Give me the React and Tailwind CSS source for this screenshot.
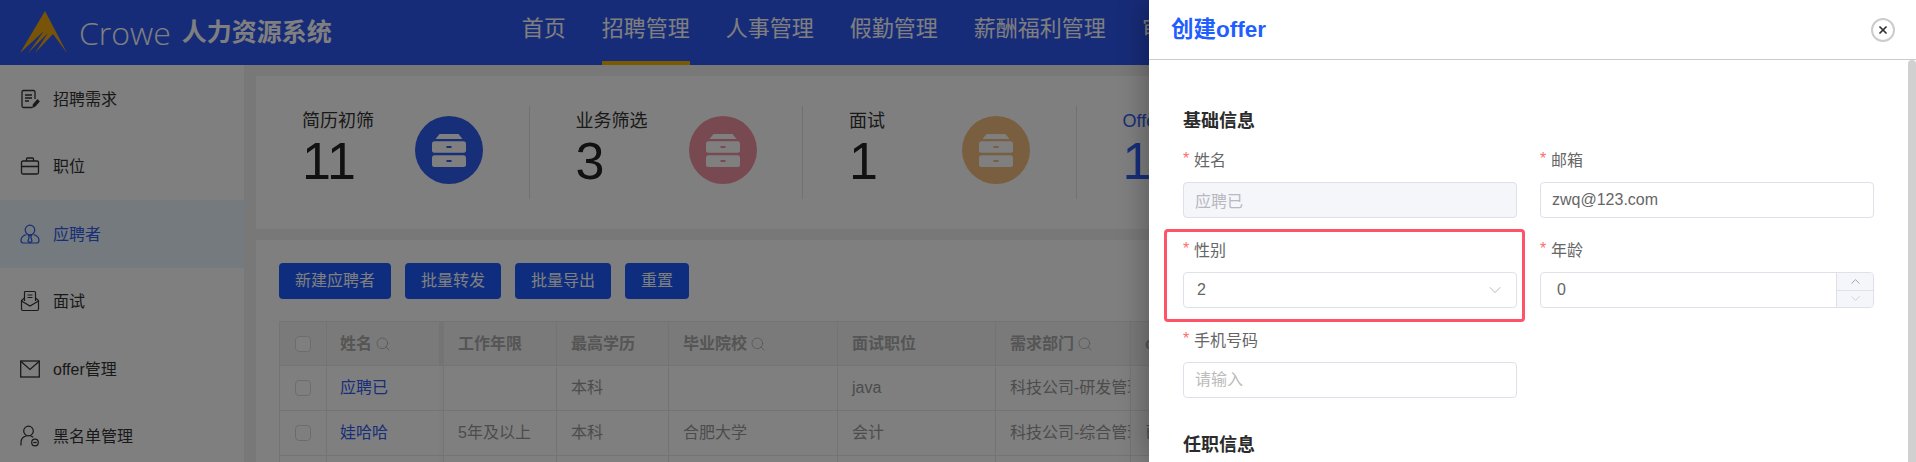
import React from 'react'
import { ChevronDown, ChevronUp, Search, X } from 'lucide-react'

const navItems = ['首页', '招聘管理', '人事管理', '假勤管理', '薪酬福利管理', '审批管理']

const stats = [
  { label: '简历初筛', value: 11, color: 'bg-[#2f5cf0]', icon: '#2f5cf0' },
  { label: '业务筛选', value: 3, color: 'bg-[#f293a2]', icon: '#f293a2' },
  { label: '面试', value: 1, color: 'bg-[#f5bd80]', icon: '#f5bd80' },
  { label: 'Offer', value: 1, color: 'bg-[#2f5cf0]', icon: '#2f5cf0', active: true },
]

function LogoMark() {
  return (
    <svg width="48" height="43" viewBox="0 0 48 43" className="shrink-0">
      <path d="M25 0 L47 42 L33 23 L15 42 L28 22 L8 42 L24 20 L0 42 Z" fill="#f0a810" />
    </svg>
  )
}

function NoteIcon() {
  return (
    <svg width="20" height="20" viewBox="0 0 20 20" fill="none" stroke="currentColor" strokeWidth="1.3">
      <path d="M15 10V3a1.5 1.5 0 0 0-1.5-1.5h-10A1.5 1.5 0 0 0 2 3v14a1.5 1.5 0 0 0 1.5 1.5H12" />
      <path d="M5 6h7M5 9h7M5 12h4" />
      <path d="M13 18l.5-2.5 4-4.5 1.5 1.5-4 4.5z" fill="currentColor" />
    </svg>
  )
}

function BriefcaseIcon() {
  return (
    <svg width="20" height="20" viewBox="0 0 20 20" fill="none" stroke="currentColor" strokeWidth="1.3">
      <rect x="1.5" y="5" width="17" height="13" rx="1.5" />
      <path d="M6.5 5V3a1 1 0 0 1 1-1h5a1 1 0 0 1 1 1v2M1.5 10.5h17" />
    </svg>
  )
}

function ApplicantIcon() {
  return (
    <svg width="20" height="20" viewBox="0 0 20 20" fill="none" stroke="currentColor" strokeWidth="1.2">
      <circle cx="10" cy="6" r="4.8" />
      <path d="M6.5 10.5C3 11.5 1 14 1 16.5 1 18 2 19 3.5 19h13c1.500 0 2.500-1 2.500-2.500 0-2.500-2-5-5.500-6" />
      <path d="M8.500 11.500h3l-.7 1.500 1.200 4-2 2-2-2 1.200-4z" />
    </svg>
  )
}

function InterviewIcon() {
  return (
    <svg width="20" height="22" viewBox="0 0 20 22" fill="none" stroke="currentColor" strokeWidth="1.2">
      <path d="M4.500 11V2.500a1 1 0 0 1 1-1h9a1 1 0 0 1 1 1V11" />
      <path d="M7.500 5h5M7.500 7.500h5" />
      <path d="M4.500 8 1.500 10.500V19a1.500 1.500 0 0 0 1.500 1.500h14a1.500 1.500 0 0 0 1.500-1.500v-8.500L15.500 8" />
      <path d="M1.500 11 10 16l8.500-5" />
    </svg>
  )
}

function MailIcon() {
  return (
    <svg width="20" height="18" viewBox="0 0 20 18" fill="none" stroke="currentColor" strokeWidth="1.3">
      <rect x="0.700" y="1" width="18.600" height="16" />
      <path d="M1 1.500 10 9.500l9-8" />
    </svg>
  )
}

function BlacklistIcon() {
  return (
    <svg width="20" height="22" viewBox="0 0 20 22" fill="none" stroke="currentColor" strokeWidth="1.2">
      <circle cx="8.500" cy="6" r="4.800" />
      <path d="M1 20.500v-3c0-3.500 2.500-6 5.500-6.500M10.500 11c1 .2 2 .7 2.700 1.300" />
      <circle cx="15" cy="17.500" r="3.300" />
      <path d="M13.300 17.500h3.400" />
    </svg>
  )
}

const sideItems = [
  { label: '招聘需求', Icon: NoteIcon },
  { label: '职位', Icon: BriefcaseIcon },
  { label: '应聘者', Icon: ApplicantIcon, active: true },
  { label: '面试', Icon: InterviewIcon },
  { label: 'offer管理', Icon: MailIcon },
  { label: '黑名单管理', Icon: BlacklistIcon },
]

function DrawerCabinet({ color }) {
  return (
    <svg width="34" height="33" viewBox="0 0 34 33">
      <path d="M7.500 0h19l4 5H3.500z" fill="#fff" />
      <rect x="0" y="7.300" width="34" height="11.400" rx="2.500" fill="#fff" />
      <rect x="0" y="21.300" width="34" height="11.700" rx="2.500" fill="#fff" />
      <rect x="14.500" y="12" width="5" height="2" fill={color} />
      <rect x="14.500" y="26" width="5" height="2" fill={color} />
    </svg>
  )
}

function Checkbox() {
  return <span className="block h-4 w-4 rounded-sm border border-[#d9d9d9] bg-white" />
}

const columns = [
  { title: '工作年限' },
  { title: '最高学历' },
  { title: '毕业院校', search: true },
  { title: '面试职位' },
  { title: '需求部门', search: true },
  { title: 'offer状态' },
]

const rows = [
  { name: '应聘已', cells: ['', '本科', '', 'java', '科技公司-研发管理部', ''] },
  { name: '娃哈哈', cells: ['5年及以上', '本科', '合肥大学', '会计', '科技公司-综合管理部', '已发送'] },
  { name: '', cells: ['', '', '', '', '', ''] },
]

function Table() {
  return (
    <table className="w-[1400px] table-fixed border-collapse text-[16px]">
      <colgroup>
        <col className="w-[47px]" />
        <col className="w-[117px]" />
        <col className="w-[113px]" />
        <col className="w-[112px]" />
        <col className="w-[169px]" />
        <col className="w-[158px]" />
        <col className="w-[135px]" />
        <col />
      </colgroup>
      <thead>
        <tr className="h-[44px] bg-[#f5f5f5] font-semibold text-[#aaa]">
          <th className="border border-[#e8e8e8] pl-[15px]">
            <Checkbox />
          </th>
          <th className="relative border border-[#e8e8e8] pl-[13px] text-left font-semibold">
            <span className="flex items-center gap-[3px]">
              姓名
              <Search size={16} strokeWidth={1.2} />
            </span>
            <span className="absolute inset-y-0 right-0 w-[4px] bg-black/5" />
          </th>
          {columns.map((col) => (
            <th key={col.title} className="border border-[#e8e8e8] pl-[14px] text-left font-semibold">
              <span className="flex items-center gap-[3px]">
                {col.title}
                {col.search && <Search size={16} strokeWidth={1.2} />}
              </span>
            </th>
          ))}
          <th className="border border-[#e8e8e8]" />
        </tr>
      </thead>
      <tbody>
        {rows.map((row, i) => (
          <tr key={i} className="h-[45px] bg-white text-[#999]">
            <td className="border border-[#e8e8e8] pl-[15px]">
              <Checkbox />
            </td>
            <td className="relative border border-[#e8e8e8] pl-[13px] text-[#2f5cf0]">
              {row.name}
              <span className="absolute inset-y-0 right-0 w-[4px] bg-black/[0.02]" />
            </td>
            {row.cells.map((cell, j) => (
              <td key={j} className="overflow-hidden border border-[#e8e8e8] pl-[14px] pr-[2px] whitespace-nowrap">
                {cell}
              </td>
            ))}
            <td className="border border-[#e8e8e8]" />
          </tr>
        ))}
      </tbody>
    </table>
  )
}

function Label({ children }) {
  return (
    <label className="flex h-6 items-center pt-[2px] text-[16px] leading-6 text-[#666]">
      <span className="mr-[4px] w-[7px] -translate-y-[2px] text-[16px] leading-none text-[#ff6b6b]">*</span>
      {children}
    </label>
  )
}

const inputClass =
  'mt-[10px] block h-9 w-full rounded-[4px] border border-[#dfe0ea] px-[11px] text-[16px] text-[#666] outline-none placeholder:text-[#bbb]'

export default function App() {
  return (
    <div className="relative h-[462px] w-full overflow-hidden bg-white font-['Liberation_Sans','Noto_Sans_CJK_SC',sans-serif]">
      {/* Top bar */}
      <header className="flex h-[65px] items-center bg-[#2f58f2] pl-[20px] text-white">
        <LogoMark />
        <span className="ml-[11px] font-['Open_Sans',sans-serif] text-[32px] font-light">Crowe</span>
        <span className="ml-[11px] text-[25px] font-bold">人力资源系统</span>
        <nav className="ml-[190px] flex h-full gap-9">
          {navItems.map((item) => (
            <a
              key={item}
              className={`flex items-center whitespace-nowrap border-b-4 pb-[5px] text-[22px] ${
                item === '招聘管理' ? 'border-[#f5b400]' : 'border-transparent'
              }`}
            >
              {item}
            </a>
          ))}
        </nav>
      </header>

      <div className="flex h-[397px]">
        {/* Sidebar */}
        <aside className="w-[244px] shrink-0 bg-white">
          {sideItems.map(({ label, Icon, active }) => (
            <div
              key={label}
              className={`flex h-[67.500px] items-center gap-[13px] pl-[20px] text-[16px] ${
                active ? 'bg-[#e8f4fb] text-[#2f5cf0]' : 'text-[#333]'
              }`}
            >
              <span className="flex w-5 justify-center">
                <Icon />
              </span>
              <span className="pt-[2px]">{label}</span>
            </div>
          ))}
        </aside>

        {/* Main content */}
        <main className="min-w-0 flex-1 overflow-hidden bg-[#f0f0f0] pl-3 pt-[11px]">
          <section className="flex h-[153px] w-[1700px] items-center bg-white">
            {stats.map((s) => (
              <div
                key={s.label}
                className="flex h-[93px] w-[273.500px] shrink-0 border-r border-[#e3e3e3] pl-[46px]"
              >
                <div className="w-[113px] pt-[2px]">
                  <div className={`text-[18px] leading-[26px] ${s.active ? 'text-[#2f5cf0]' : 'text-[#333]'}`}>{s.label}</div>
                  <div className={`text-[52px] leading-[54px] ${s.active ? 'text-[#2f5cf0]' : 'text-[#222]'}`}>{s.value}</div>
                </div>
                <div className={`mt-[10px] flex h-[68px] w-[68px] items-center justify-center rounded-full ${s.color}`}>
                  <DrawerCabinet color={s.icon} />
                </div>
              </div>
            ))}
          </section>

          <section className="mt-[11px] h-[300px] w-[1700px] bg-white pl-[23px] pt-[23px]">
            <div className="flex gap-[14px]">
              {['新建应聘者', '批量转发', '批量导出', '重置'].map((label) => (
                <button key={label} className="h-9 rounded-[4px] bg-[#1d5aff] px-4 text-[16px] text-white">
                  {label}
                </button>
              ))}
            </div>
            <div className="mt-[22px]">
              <Table />
            </div>
          </section>
        </main>
      </div>

      {/* Mask */}
      <div className="absolute inset-0 bg-black/50" />

      {/* Drawer */}
      <div className="absolute inset-y-0 right-0 flex w-[767px] flex-col bg-white shadow-[-6px_0_24px_rgba(0,0,0,0.25)]">
        <div className="flex h-[60px] shrink-0 items-center justify-between border-b border-[#ccc] pl-[22px] pr-[21px]">
          <h2 className="text-[22.500px] font-semibold text-[#1f5eff]">创建offer</h2>
          <button className="flex h-6 w-6 items-center justify-center rounded-full border-2 border-[#ccc] text-[#333]">
            <X size={12} strokeWidth={3.5} />
          </button>
        </div>

        <div className="flex min-h-0 flex-1">
          <div className="flex-1 overflow-hidden pl-[34px] pr-[34px] pt-[48px]">
            <h3 className="text-[18px] font-bold leading-[27px] text-[#2b2b2b]">基础信息</h3>
            <div className="mt-[13px] grid grid-cols-2 gap-x-[23px]">
              <div className="h-[90px]">
                <Label>姓名</Label>
                <input disabled value="应聘已" className={`${inputClass} bg-[#f5f6fa] text-[#b8b8c0]`} />
              </div>
              <div className="h-[90px]">
                <Label>邮箱</Label>
                <input readOnly value="zwq@123.com" className={inputClass} />
              </div>
              <div className="relative h-[90px]">
                <span className="absolute -left-[19px] -right-[8px] -top-[9px] bottom-[6px] rounded-[4px] border-[3px] border-[#ff5468]" />
                <Label>性别</Label>
                <div className={`${inputClass} flex items-center justify-between !pl-[13px] !pr-[11px]`}>
                  2
                  <ChevronDown size={20} strokeWidth={1} className="text-[#aaa]" />
                </div>
              </div>
              <div className="h-[90px]">
                <Label>年龄</Label>
                <div className={`${inputClass} flex items-stretch justify-between overflow-hidden !pl-[16px] !pr-0`}>
                  <span className="self-center">0</span>
                  <span className="flex w-[37px] flex-col border-l border-[#dfe0ea] bg-[#f5f6fa]">
                    <span className="flex flex-1 items-center justify-center border-b border-[#dfe0ea] text-[#777]">
                      <ChevronUp size={15} strokeWidth={1} />
                    </span>
                    <span className="flex flex-1 items-center justify-center text-[#bbb]">
                      <ChevronDown size={15} strokeWidth={1} />
                    </span>
                  </span>
                </div>
              </div>
              <div className="h-[70px]">
                <Label>手机号码</Label>
                <input placeholder="请输入" className={inputClass} />
              </div>
            </div>
            <h3 className="mt-[34px] text-[18px] font-bold leading-[27px] text-[#2b2b2b]">任职信息</h3>
          </div>
          <div className="w-2 shrink-0 rounded-t-[4px] bg-[#d0d0d0]" />
        </div>
      </div>
    </div>
  )
}
